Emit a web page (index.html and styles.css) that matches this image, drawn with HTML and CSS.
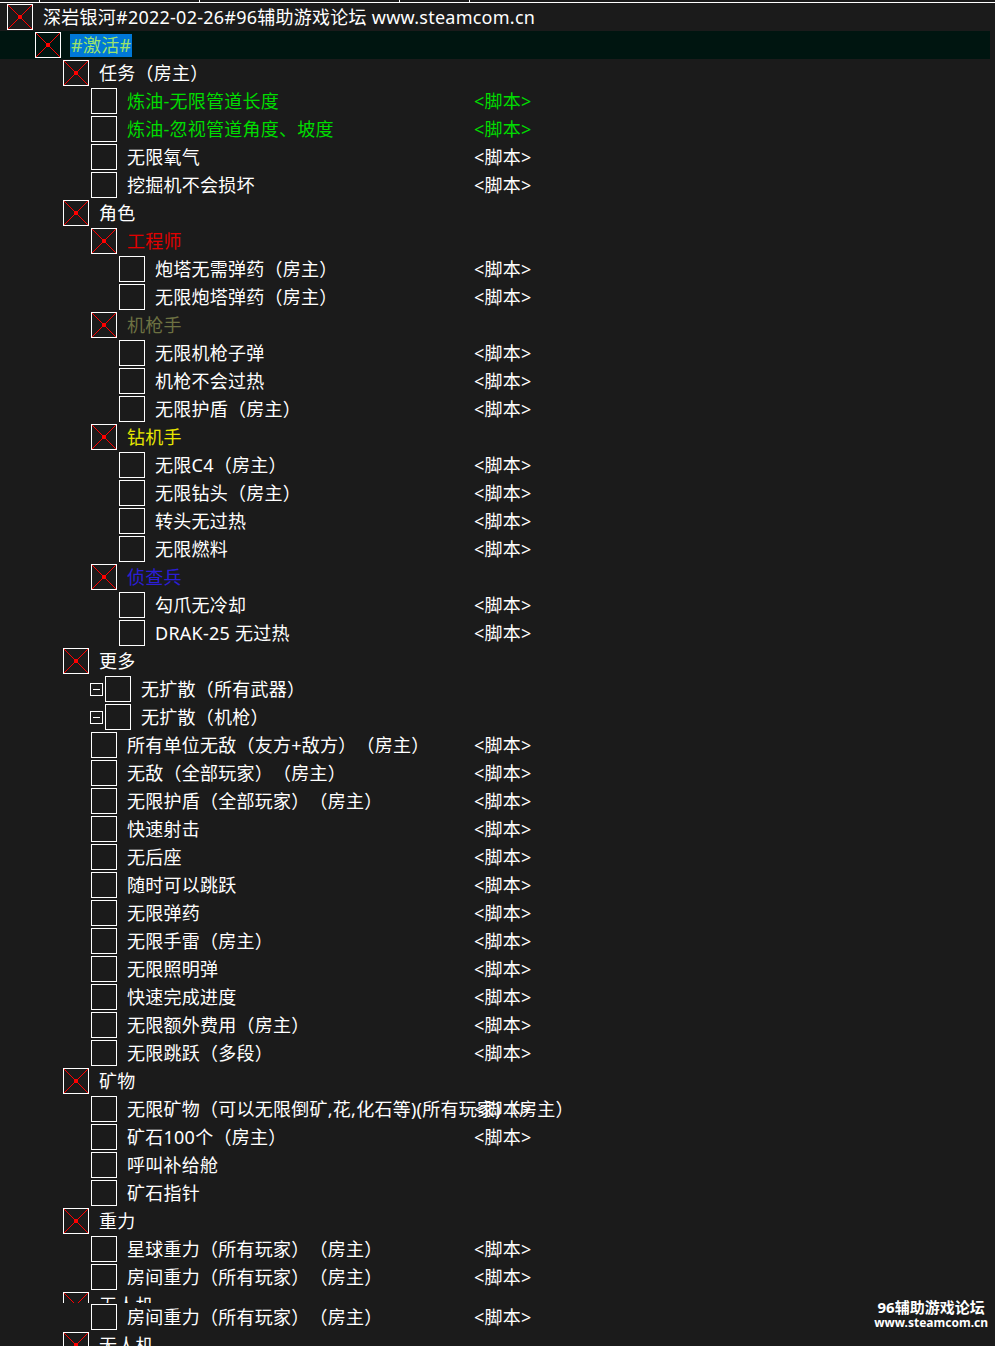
FILE: index.html
```html
<!DOCTYPE html>
<html>
<head>
    <title>深岩银河 CT</title>
    <link rel="stylesheet" href="styles.css">
</head>
<body>
    <div class="head"><span class="c1"></span><span class="c2"></span><span class="c3"></span><span class="c4"></span></div>
    <div class="table">
        <div class="row"><div class="item l0"><span class="cb on"></span><span class="name">深岩银河#2022-02-26#96辅助游戏论坛 www.steamcom.cn</span></div></div>
        <div class="row active"><div class="item l1"><span class="cb on"></span><span class="name sel">#激活#</span></div></div>
        <div class="row"><div class="item l2"><span class="cb on"></span><span class="name">任务（房主）</span></div></div>
        <div class="row"><div class="item l3"><span class="cb"></span><span class="name green">炼油-无限管道长度</span></div><span class="val green">&lt;脚本&gt;</span></div>
        <div class="row"><div class="item l3"><span class="cb"></span><span class="name green">炼油-忽视管道角度、坡度</span></div><span class="val green">&lt;脚本&gt;</span></div>
        <div class="row"><div class="item l3"><span class="cb"></span><span class="name">无限氧气</span></div><span class="val">&lt;脚本&gt;</span></div>
        <div class="row"><div class="item l3"><span class="cb"></span><span class="name">挖掘机不会损坏</span></div><span class="val">&lt;脚本&gt;</span></div>
        <div class="row"><div class="item l2"><span class="cb on"></span><span class="name">角色</span></div></div>
        <div class="row"><div class="item l3"><span class="cb on"></span><span class="name red">工程师</span></div></div>
        <div class="row"><div class="item l4"><span class="cb"></span><span class="name">炮塔无需弹药（房主）</span></div><span class="val">&lt;脚本&gt;</span></div>
        <div class="row"><div class="item l4"><span class="cb"></span><span class="name">无限炮塔弹药（房主）</span></div><span class="val">&lt;脚本&gt;</span></div>
        <div class="row"><div class="item l3"><span class="cb on"></span><span class="name olive">机枪手</span></div></div>
        <div class="row"><div class="item l4"><span class="cb"></span><span class="name">无限机枪子弹</span></div><span class="val">&lt;脚本&gt;</span></div>
        <div class="row"><div class="item l4"><span class="cb"></span><span class="name">机枪不会过热</span></div><span class="val">&lt;脚本&gt;</span></div>
        <div class="row"><div class="item l4"><span class="cb"></span><span class="name">无限护盾（房主）</span></div><span class="val">&lt;脚本&gt;</span></div>
        <div class="row"><div class="item l3"><span class="cb on"></span><span class="name yellow">钻机手</span></div></div>
        <div class="row"><div class="item l4"><span class="cb"></span><span class="name">无限C4（房主）</span></div><span class="val">&lt;脚本&gt;</span></div>
        <div class="row"><div class="item l4"><span class="cb"></span><span class="name">无限钻头（房主）</span></div><span class="val">&lt;脚本&gt;</span></div>
        <div class="row"><div class="item l4"><span class="cb"></span><span class="name">转头无过热</span></div><span class="val">&lt;脚本&gt;</span></div>
        <div class="row"><div class="item l4"><span class="cb"></span><span class="name">无限燃料</span></div><span class="val">&lt;脚本&gt;</span></div>
        <div class="row"><div class="item l3"><span class="cb on"></span><span class="name blue">侦查兵</span></div></div>
        <div class="row"><div class="item l4"><span class="cb"></span><span class="name">勾爪无冷却</span></div><span class="val">&lt;脚本&gt;</span></div>
        <div class="row"><div class="item l4"><span class="cb"></span><span class="name">DRAK-25 无过热</span></div><span class="val">&lt;脚本&gt;</span></div>
        <div class="row"><div class="item l2"><span class="cb on"></span><span class="name">更多</span></div></div>
        <div class="row"><div class="item l3 tree"><span class="tog"></span><span class="cb"></span><span class="name">无扩散（所有武器）</span></div></div>
        <div class="row"><div class="item l3 tree"><span class="tog"></span><span class="cb"></span><span class="name">无扩散（机枪）</span></div></div>
        <div class="row"><div class="item l3"><span class="cb"></span><span class="name">所有单位无敌（友方+敌方）（房主）</span></div><span class="val">&lt;脚本&gt;</span></div>
        <div class="row"><div class="item l3"><span class="cb"></span><span class="name">无敌（全部玩家）（房主）</span></div><span class="val">&lt;脚本&gt;</span></div>
        <div class="row"><div class="item l3"><span class="cb"></span><span class="name">无限护盾（全部玩家）（房主）</span></div><span class="val">&lt;脚本&gt;</span></div>
        <div class="row"><div class="item l3"><span class="cb"></span><span class="name">快速射击</span></div><span class="val">&lt;脚本&gt;</span></div>
        <div class="row"><div class="item l3"><span class="cb"></span><span class="name">无后座</span></div><span class="val">&lt;脚本&gt;</span></div>
        <div class="row"><div class="item l3"><span class="cb"></span><span class="name">随时可以跳跃</span></div><span class="val">&lt;脚本&gt;</span></div>
        <div class="row"><div class="item l3"><span class="cb"></span><span class="name">无限弹药</span></div><span class="val">&lt;脚本&gt;</span></div>
        <div class="row"><div class="item l3"><span class="cb"></span><span class="name">无限手雷（房主）</span></div><span class="val">&lt;脚本&gt;</span></div>
        <div class="row"><div class="item l3"><span class="cb"></span><span class="name">无限照明弹</span></div><span class="val">&lt;脚本&gt;</span></div>
        <div class="row"><div class="item l3"><span class="cb"></span><span class="name">快速完成进度</span></div><span class="val">&lt;脚本&gt;</span></div>
        <div class="row"><div class="item l3"><span class="cb"></span><span class="name">无限额外费用（房主）</span></div><span class="val">&lt;脚本&gt;</span></div>
        <div class="row"><div class="item l3"><span class="cb"></span><span class="name">无限跳跃（多段）</span></div><span class="val">&lt;脚本&gt;</span></div>
        <div class="row"><div class="item l2"><span class="cb on"></span><span class="name">矿物</span></div></div>
        <div class="row"><div class="item l3"><span class="cb"></span><span class="name">无限矿物（可以无限倒矿,花,化石等)(所有玩家)（房主）</span></div><span class="val">&lt;脚本&gt;</span></div>
        <div class="row"><div class="item l3"><span class="cb"></span><span class="name">矿石100个（房主）</span></div><span class="val">&lt;脚本&gt;</span></div>
        <div class="row"><div class="item l3"><span class="cb"></span><span class="name">呼叫补给舱</span></div></div>
        <div class="row"><div class="item l3"><span class="cb"></span><span class="name">矿石指针</span></div></div>
        <div class="row"><div class="item l2"><span class="cb on"></span><span class="name">重力</span></div></div>
        <div class="row"><div class="item l3"><span class="cb"></span><span class="name">星球重力（所有玩家）（房主）</span></div><span class="val">&lt;脚本&gt;</span></div>
        <div class="row"><div class="item l3"><span class="cb"></span><span class="name">房间重力（所有玩家）（房主）</span></div><span class="val">&lt;脚本&gt;</span></div>
        <!-- redraw glitch: only the top of this row got painted -->
        <div class="row clip"><div class="item l2"><span class="cb on"></span><span class="name">无人机</span></div></div>
        <div class="row"><div class="item l3"><span class="cb"></span><span class="name">房间重力（所有玩家）（房主）</span></div><span class="val">&lt;脚本&gt;</span></div>
        <div class="row"><div class="item l2"><span class="cb on"></span><span class="name">无人机</span></div></div>
    </div>
    <div class="mark">
        <div class="mark-title">96辅助游戏论坛</div>
        <div class="mark-url">www.steamcom.cn</div>
    </div>
</body>
</html>
```

FILE: styles.css
```css
html, body {
    margin: 0;
    height: 1346px;
    overflow: hidden;
}
body {
    background-color: #1b1b1b;
    color: #ffffff;
    font-family: "Noto Sans", "Noto Sans CJK SC", sans-serif;
    font-size: 18px;
    letter-spacing: 0.25px;
    text-spacing-trim: space-all;
}
.head {
    display: flex;
    height: 2px;
    border-bottom: 1px solid #ffffff;
}
.head span {
    box-sizing: border-box;
    border-right: 1px solid #ffffff;
}
.head .c1 { width: 40px; }
.head .c2 { width: 160px; }
.head .c3 { width: 200px; }
.head .c4 { width: 70px; }

.row {
    display: grid;
    grid-template-columns: 467px auto;
    align-items: center;
    height: 28px;
    padding-left: 7px;
    margin-right: 5px;
}
.row.active {
    background-color: #001510;
}
.row.clip {
    height: 12px;
    overflow: hidden;
    align-items: start;
}
.item {
    display: flex;
    align-items: center;
    gap: 10px;
    height: 28px;
    min-width: 0;
    white-space: nowrap;
}
.l0 { padding-left: 0; }
.l1 { padding-left: 28px; }
.l2 { padding-left: 56px; }
.l3 { padding-left: 84px; }
.l4 { padding-left: 112px; }
.l3.tree { padding-left: 83px; }

.cb {
    flex: none;
    position: relative;
    box-sizing: border-box;
    width: 26px;
    height: 26px;
    border: 1px solid #ffffff;
}
.cb.on {
    background:
        linear-gradient(to top right, transparent calc(50% - 0.7px), #ff0000 calc(50% - 0.7px), #ff0000 calc(50% + 0.7px), transparent calc(50% + 0.7px)),
        linear-gradient(to bottom right, transparent calc(50% - 0.7px), #ff0000 calc(50% - 0.7px), #ff0000 calc(50% + 0.7px), transparent calc(50% + 0.7px));
}
.cb.on::after {
    content: "";
    position: absolute;
    left: 50%;
    top: 50%;
    width: 4px;
    height: 4px;
    margin: -2px 0 0 -2px;
    background-color: #ff0000;
}
.tog {
    flex: none;
    display: flex;
    align-items: center;
    justify-content: center;
    box-sizing: border-box;
    width: 13px;
    height: 13px;
    margin-right: -8px;
    border: 1px solid #ffffff;
}
.tog::before {
    content: "";
    width: 7px;
    height: 1px;
    background-color: #ffffff;
}
.name {
    line-height: 28px;
}
.sel {
    display: inline-block;
    line-height: 23px;
    margin-left: -1px;
    padding: 0 1px;
    background-color: #0078d7;
    color: #9be36b;
}
.val {
    white-space: nowrap;
    line-height: 28px;
}
.green { color: #00dc00; }
.red { color: #e00000; }
.olive { color: #6d7142; }
.yellow { color: #e6e600; }
.blue { color: #2b1ed6; }

.mark {
    position: absolute;
    right: 7px;
    bottom: 15px;
    text-align: center;
    font-weight: 700;
    letter-spacing: 0;
    color: #ffffff;
}
.mark-title {
    font-size: 15px;
    line-height: 16px;
}
.mark-url {
    font-size: 12px;
    line-height: 16px;
}
```
